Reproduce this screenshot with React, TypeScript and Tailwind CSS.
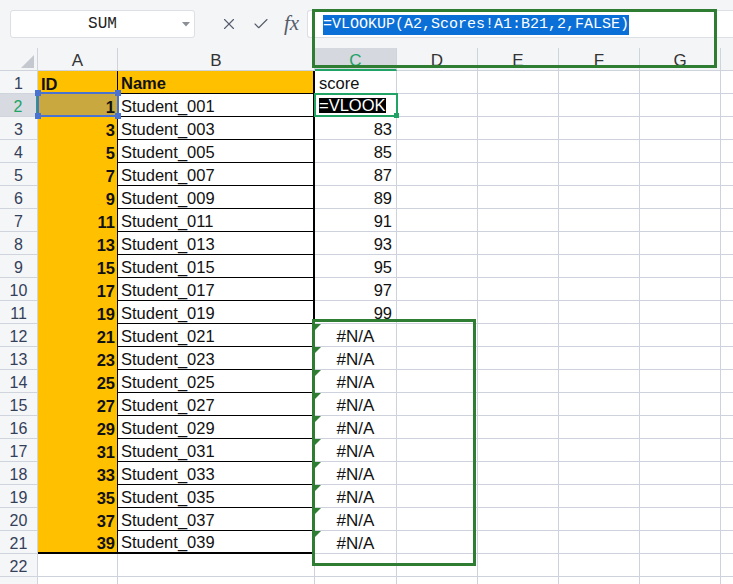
import React from "react";
import { X, Check } from "lucide-react";

const rows = Array.from({ length: 23 }, (_, i) => i + 1);

const pad = (n: number) => String(n).padStart(3, "0");

const RowHeader: React.FC<{ n: number }> = ({ n }) => {
  const active = n === 2;
  return (
    <div
      className={
        active
          ? "w-[38px] h-[23px] shrink-0 flex items-center justify-center pt-[4px] border-b border-r-2 border-b-[#d0d4dd] border-r-[#21a366] bg-[#d7dae1] text-[#21a366] text-[16px]"
          : "w-[38px] h-[23px] shrink-0 flex items-center justify-center pt-[4px] border-b border-r border-[#d0d4dd] bg-[#f5f6f8] text-[#34405a] text-[16px]"
      }
    >
      {n < 23 ? n : ""}
    </div>
  );
};

const CellA: React.FC<{ r: number }> = ({ r }) => {
  if (r === 1)
    return (
      <div className="w-[80px] h-[23px] shrink-0 flex items-center pt-[3px] pl-[3px] bg-[#ffc000] border-r border-r-black font-bold">
        ID
      </div>
    );
  if (r <= 21) {
    const bg = r === 2 ? "bg-[#c8a83f]" : "bg-[#ffc000]";
    const bottom = r === 21 ? "border-b-2 border-b-black" : "";
    return (
      <div
        className={`w-[80px] h-[23px] shrink-0 flex items-center justify-end pt-[3px] pr-[2px] border-r border-r-black font-bold ${bg} ${bottom}`}
      >
        {2 * r - 3}
      </div>
    );
  }
  return <div className="w-[80px] h-[23px] shrink-0 border-r border-b border-[#cdd2dc]" />;
};

const CellB: React.FC<{ r: number }> = ({ r }) => {
  if (r === 1)
    return (
      <div className="w-[197px] h-[23px] shrink-0 flex items-center pt-[3px] pl-[3px] bg-[#ffc000] border-b border-r-2 border-black font-bold">
        Name
      </div>
    );
  if (r <= 21)
    return (
      <div
        className={
          r === 21
            ? "w-[197px] h-[23px] shrink-0 flex items-center pt-[2px] pl-[3px] border-b-2 border-r-2 border-black"
            : "w-[197px] h-[23px] shrink-0 flex items-center pt-[3px] pl-[3px] border-b border-r-2 border-black"
        }
      >
        Student_{pad(2 * r - 3)}
      </div>
    );
  return <div className="w-[197px] h-[23px] shrink-0 border-r border-b border-[#cdd2dc]" />;
};

const CellC: React.FC<{ r: number }> = ({ r }) => {
  const base = "relative w-[82px] h-[23px] shrink-0 flex items-center pt-[3px] border-r border-b border-[#cdd2dc]";
  if (r === 1) return <div className={`${base} pl-[4px]`}>score</div>;
  if (r === 2)
    return (
      <div className="w-[82px] h-[23px] shrink-0 flex items-center pt-[1px] pl-[4px] border-r border-b border-[#cdd2dc]">
        <span className="bg-black text-white leading-[15px]">=VLOOK</span>
      </div>
    );
  if (r <= 11) return <div className={`${base} justify-end pr-[4px]`}>{77 + 2 * r}</div>;
  if (r <= 21)
    return (
      <div className={`${base} justify-center text-[17px]`}>
        <span className="absolute left-0 top-0 w-0 h-0 border-t-[6px] border-t-[#2e7d32] border-r-[6px] border-r-transparent" />
        #N/A
      </div>
    );
  return <div className={base} />;
};

const Blank: React.FC = () => (
  <div className="w-[81px] h-[23px] shrink-0 border-r border-b border-[#cdd2dc]" />
);

export default function App() {
  return (
    <div className="relative w-[733px] h-[584px] overflow-hidden bg-white text-[#111] font-['Liberation_Sans',Arial,sans-serif] text-[16.5px]">
      {/* toolbar */}
      <div className="h-[48px] flex items-center pl-[10px] bg-[#f4f5f7]">
        <div className="relative w-[185px] h-[28px] flex items-center justify-center bg-white border border-[#dcdfe4] rounded-[3px] font-['Liberation_Mono',monospace] text-[16px] text-[#222]">
          SUM
          <svg className="absolute right-[4px] top-[11px]" width="8" height="5" viewBox="0 0 8 5">
            <polygon points="0,0 8,0 4,4.5" fill="#8a8f98" />
          </svg>
        </div>
        <div className="w-[112px] h-[28px] flex items-center pl-[25px] gap-[14px] text-[#555c6a]">
          <X size={18} strokeWidth={1.5} />
          <Check size={18} strokeWidth={1.5} />
          <span className="font-['Liberation_Serif',serif] italic text-[21px] leading-none -mt-[2px]">fx</span>
        </div>
        <div className="flex-1 h-[28px] flex items-center pl-[15px] pt-[2px] bg-white border-y border-l border-[#dcdfe4] rounded-l-[3px]">
          <span className="bg-[#0b6fd8] text-white font-['Liberation_Mono',monospace] text-[15px] leading-[20px]">
            =VLOOKUP(A2,Scores!A1:B21,2,FALSE)
          </span>
        </div>
      </div>

      {/* column headers */}
      <div className="flex h-[23px] bg-[#f4f5f7] text-[#333] text-[17px]">
        <div className="relative w-[38px] shrink-0 border-r border-b border-[#cfd3db]">
          <svg className="absolute left-[21px] top-[7px]" width="13" height="13" viewBox="0 0 13 13">
            <polygon points="0,13 13,13 13,0" fill="#c5c8ce" />
          </svg>
        </div>
        <div className="w-[80px] shrink-0 flex items-center justify-center pt-[4px] border-r border-b border-[#cfd3db]">A</div>
        <div className="w-[197px] shrink-0 flex items-center justify-center pt-[4px] border-r border-b border-[#cfd3db]">B</div>
        <div className="w-[82px] shrink-0 flex items-center justify-center pt-[4px] bg-[#d5d8df] text-[#21a366] border-r border-r-[#cfd3db] border-b-2 border-b-[#21a366]">
          C
        </div>
        <div className="w-[81px] shrink-0 flex items-center justify-center pt-[4px] border-r border-b border-[#cfd3db]">D</div>
        <div className="w-[81px] shrink-0 flex items-center justify-center pt-[4px] border-r border-b border-[#cfd3db]">E</div>
        <div className="w-[81px] shrink-0 flex items-center justify-center pt-[4px] border-r border-b border-[#cfd3db]">F</div>
        <div className="w-[81px] shrink-0 flex items-center justify-center pt-[4px] border-r border-b border-[#cfd3db]">G</div>
        <div className="flex-1 border-b border-[#cfd3db]" />
      </div>

      {/* rows */}
      {rows.map((r) => (
        <div key={r} className="flex h-[23px]">
          <RowHeader n={r} />
          <CellA r={r} />
          <CellB r={r} />
          <CellC r={r} />
          <Blank />
          <Blank />
          <Blank />
          <Blank />
          <div className="flex-1 h-[23px] border-b border-[#cdd2dc]" />
        </div>
      ))}

      {/* A2 reference highlight */}
      <div className="absolute left-[37px] top-[92px] w-[82px] h-[25px] border-2 border-[#4a72d0]">
        <span className="absolute -left-[4px] -top-[4px] w-[6px] h-[6px] bg-[#4a72d0]" />
        <span className="absolute -right-[4px] -top-[4px] w-[6px] h-[6px] bg-[#4a72d0]" />
        <span className="absolute -left-[4px] -bottom-[4px] w-[6px] h-[6px] bg-[#4a72d0]" />
        <span className="absolute -right-[4px] -bottom-[4px] w-[6px] h-[6px] bg-[#4a72d0]" />
      </div>

      {/* C2 active cell */}
      <div className="absolute left-[314px] top-[93px] w-[84px] h-[24px] border-2 border-[#21a366]">
        <span className="absolute -right-[3px] -bottom-[3px] w-[5px] h-[5px] bg-[#21a366]" />
      </div>

      {/* green annotation boxes */}
      <div className="absolute left-[312px] top-[9px] w-[405px] h-[59px] border-[3px] border-[#2e7d32]" />
      <div className="absolute left-[312px] top-[319px] w-[164px] h-[247px] border-[3px] border-[#2e7d32]" />
    </div>
  );
}
